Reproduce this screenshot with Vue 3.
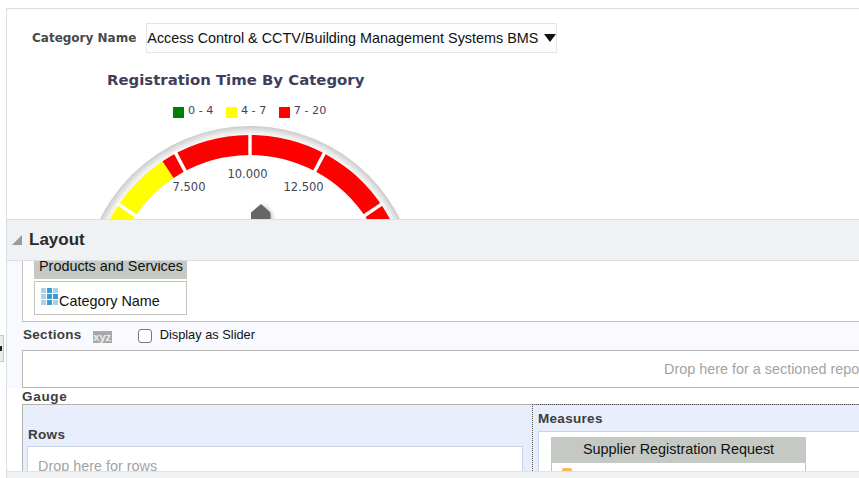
<script setup>
const cx = 250
const cy = 293.5
const rOut = 158.5
const rIn = 138.5
const pt = (r, deg) => {
  const a = (deg * Math.PI) / 180
  return `${(cx + r * Math.sin(a)).toFixed(2)} ${(cy - r * Math.cos(a)).toFixed(2)}`
}
const band = (from, to) =>
  `M${pt(rOut, from)} A${rOut} ${rOut} 0 0 1 ${pt(rOut, to)} L${pt(rIn, to)} A${rIn} ${rIn} 0 0 0 ${pt(rIn, from)} Z`
const segments = [
  { d: band(-83, -33.5), fill: '#ffff00' },
  { d: band(-33.5, 83), fill: '#ff0000' }
]
const ticks = [-83.7, -55.8, -27.9, 0, 27.9, 55.8, 83.7].map((deg) => ({
  x1: cx + (rIn - 2) * Math.sin((deg * Math.PI) / 180),
  y1: cy - (rIn - 2) * Math.cos((deg * Math.PI) / 180),
  x2: cx + (rOut + 2) * Math.sin((deg * Math.PI) / 180),
  y2: cy - (rOut + 2) * Math.cos((deg * Math.PI) / 180)
}))
const legend = [
  { label: '0 - 4', color: '#008000' },
  { label: '4 - 7', color: '#ffff00' },
  { label: '7 - 20', color: '#ff0000' }
]
const cells = Array.from({ length: 9 }, (_, i) => i)
</script>

<template>
  <div class="page">
    <div class="handle"><span class="handle-arrow"></span></div>
    <div class="frame">
      <section class="report">
        <div class="filter">
          <span class="filter-label">Category Name</span>
          <div class="select">
            <span>Access Control &amp; CCTV/Building Management Systems BMS</span>
            <span class="caret"></span>
          </div>
        </div>
        <h2 class="title">Registration Time By Category</h2>
        <div class="legend">
          <span v-for="item in legend" :key="item.label" class="legend-item">
            <i class="swatch" :style="{ background: item.color }"></i>{{ item.label }}
          </span>
        </div>
        <svg class="gauge" width="500" height="478" viewBox="0 0 500 478">
          <defs>
            <radialGradient id="rim" gradientUnits="userSpaceOnUse" :cx="cx" :cy="cy" r="168">
              <stop offset="0.93" stop-color="#ffffff" />
              <stop offset="0.96" stop-color="#eeeeee" />
              <stop offset="1" stop-color="#c8c8c8" />
            </radialGradient>
            <filter id="needleShadow" x="-50%" y="-50%" width="200%" height="200%">
              <feGaussianBlur stdDeviation="2.5" />
            </filter>
          </defs>
          <circle :cx="cx" :cy="cy" r="167.5" fill="url(#rim)" />
          <path v-for="s in segments" :key="s.fill" :d="s.d" :fill="s.fill" />
          <line
            v-for="(t, i) in ticks"
            :key="i"
            :x1="t.x1"
            :y1="t.y1"
            :x2="t.x2"
            :y2="t.y2"
            stroke="#ffffff"
            stroke-width="3.4"
          />
          <text x="189" y="191" class="tick-label" text-anchor="middle">7.500</text>
          <text x="247.5" y="178" class="tick-label" text-anchor="middle">10.000</text>
          <text x="303.5" y="191" class="tick-label" text-anchor="middle">12.500</text>
          <path d="M256 210 L266 206 L272 216 L272 232 L256 232 Z" fill="#000" opacity="0.28" filter="url(#needleShadow)" />
          <path d="M261 204 L270.500 212.500 L270.500 232 L251 232 L251 212.500 Z" fill="#666666" />
        </svg>
      </section>

      <section class="layout">
        <header class="layout-head">
          <span class="disclosure"></span>
          <span class="layout-title">Layout</span>
        </header>
        <div class="layout-upper">
          <div class="products-box">
            <div class="col-head">Products and Services</div>
            <div class="col-item">
              <span class="grid-icon"><i v-for="c in cells" :key="c" :class="{ dark: c === 1 || c === 4 || c === 5 || c === 7 }"></i></span>
              <span class="col-text">Category Name</span>
            </div>
          </div>
          <div class="sections-row">
            <span class="bold-label sections-label">Sections</span>
            <span class="xyz">xyz</span>
            <span class="check"></span>
            <span class="slider-text">Display as Slider</span>
          </div>
          <div class="section-drop">Drop here for a sectioned report</div>
        </div>
        <div class="bold-label gauge-label">Gauge</div>
        <div class="gauge-box">
          <div class="rows">
            <div class="bold-label rows-label">Rows</div>
            <div class="rows-drop">Drop here for rows</div>
          </div>
          <div class="measures">
            <div class="bold-label measures-label">Measures</div>
            <div class="measures-area">
              <div class="measure-col">
                <div class="measure-head">Supplier Registration Request</div>
                <div class="measure-body"><i class="measure-icon"></i></div>
              </div>
            </div>
          </div>
        </div>
      </section>
      <div class="bottom-bar"></div>
    </div>
  </div>
</template>

<style scoped>
.page {
  position: relative;
  width: 859px;
  height: 478px;
  overflow: hidden;
  background: #fff;
  font-family: "Liberation Sans", Arial, sans-serif;
  padding: 8px 0 0 6px;
  box-sizing: border-box;
}
.handle {
  position: absolute;
  left: 0;
  top: 335px;
  width: 4px;
  height: 27px;
  background: #ececec;
  border: 1px solid #c8c8c8;
  border-left: 0;
  box-sizing: border-box;
}
.handle-arrow {
  position: absolute;
  left: 0;
  top: 10px;
  width: 2px;
  height: 5px;
  background: #222;
}
.frame {
  position: relative;
  height: 470px;
  border-top: 1px solid #d6dfe6;
  border-left: 1px solid #d6dfe6;
  overflow: hidden;
}
.report {
  position: relative;
  height: 210px;
  overflow: hidden;
}
.filter {
  display: flex;
  align-items: center;
  gap: 10px;
  padding: 14px 0 0 25px;
}
.filter-label {
  font-family: "DejaVu Sans", sans-serif;
  font-size: 12px;
  font-weight: bold;
  color: #494949;
}
.select {
  display: flex;
  align-items: center;
  width: 411px;
  height: 30px;
  box-sizing: border-box;
  border: 1px solid #e1e6ea;
  background: #fcfdfe;
  font-size: 14.4px;
  color: #111;
  white-space: nowrap;
}
.caret {
  width: 0;
  height: 0;
  margin-left: 6px;
  border-left: 6.5px solid transparent;
  border-right: 6.5px solid transparent;
  border-top: 8px solid #111;
}
.title {
  margin: 18px 0 0;
  padding-left: 100px;
  font-family: "DejaVu Sans", sans-serif;
  font-size: 14.9px;
  line-height: 18px;
  font-weight: bold;
  color: #3f3f5a;
}
.legend {
  display: flex;
  gap: 12.5px;
  margin-top: 15px;
  padding-left: 166px;
  font-family: "DejaVu Sans", sans-serif;
  font-size: 11.2px;
  line-height: 14px;
  color: #444458;
}
.legend-item {
  display: flex;
  align-items: center;
  gap: 4px;
}
.swatch {
  width: 11px;
  height: 11px;
  margin-top: 2px;
}
.gauge {
  position: absolute;
  left: -7px;
  top: -9px;
}
.tick-label {
  font-family: "DejaVu Sans", sans-serif;
  font-size: 11.5px;
  fill: #444458;
}
.layout {
  position: relative;
  height: 252px;
  background: #fff;
  overflow: hidden;
}
.layout-head {
  display: flex;
  align-items: center;
  gap: 7px;
  height: 42px;
  box-sizing: border-box;
  padding-left: 5px;
  background: #f0f1f2;
  border-top: 1px solid #d9dfe4;
  border-bottom: 1px solid #d9dfe4;
}
.disclosure {
  width: 0;
  height: 0;
  border-left: 10px solid transparent;
  border-bottom: 10px solid #9a9a9a;
}
.layout-title {
  font-size: 17px;
  font-weight: bold;
  color: #2a2a2a;
}
.layout-upper {
  height: 127px;
  padding-left: 15px;
  background: #f8faff;
  overflow: hidden;
}
.products-box {
  width: 1500px;
  height: 61px;
  box-sizing: border-box;
  padding: 0 0 0 11px;
  border: 1px solid #c4c4bc;
  border-top: 0;
  background: #fff;
}
.col-head {
  width: 153px;
  height: 18px;
  box-sizing: border-box;
  padding-left: 5px;
  background: #c5c9c3;
  font-size: 14.4px;
  line-height: 11px;
  color: #111;
}
.col-item {
  display: flex;
  width: 153px;
  height: 34px;
  margin-top: 2px;
  box-sizing: border-box;
  border: 1px solid #c4c4bc;
  padding: 6px 0 0 6px;
  font-size: 14.4px;
}
.grid-icon {
  display: grid;
  grid-template-columns: repeat(3, 5px);
  grid-auto-rows: 5px;
  gap: 1px;
  width: 18px;
  height: 17px;
}
.grid-icon i {
  background: #a9cfe9;
}
.grid-icon i.dark {
  background: #3d9bd3;
}
.col-text {
  margin-top: 5px;
  color: #111;
}
.sections-row {
  display: flex;
  align-items: center;
  height: 28px;
  box-sizing: border-box;
  padding-bottom: 4px;
}
.bold-label {
  font-size: 13.5px;
  font-weight: bold;
  color: #3d3d3d;
  letter-spacing: 0.3px;
}
.sections-label {
  margin-left: 1px;
}
.xyz {
  width: 19px;
  height: 12px;
  margin: 6px 0 0 11px;
  background: #a9a9a9;
  color: #eee;
  font-size: 11px;
  line-height: 12px;
  font-weight: bold;
  text-align: center;
  overflow: hidden;
}
.check {
  width: 12px;
  height: 12px;
  margin: 4px 0 0 26px;
  border: 1px solid #777;
  border-radius: 3px;
  background: #fff;
}
.slider-text {
  margin-left: 8px;
  font-size: 12.8px;
  color: #111;
}
.section-drop {
  width: 1488px;
  height: 38px;
  box-sizing: border-box;
  border: 1px solid #b8b8b4;
  background: #fff;
  text-align: center;
  font-size: 14.4px;
  line-height: 36px;
  color: #a3a3a3;
  white-space: nowrap;
}
.gauge-label {
  margin-left: 15px;
  height: 16px;
  line-height: 18px;
  letter-spacing: 0.7px;
}
.gauge-box {
  display: flex;
  width: 1500px;
  height: 80px;
  margin-left: 15px;
  border: 1px solid #b4b4ae;
  border-bottom: 0;
  background: #e8eefc;
}
.rows {
  width: 509px;
  padding: 22px 0 0 4px;
  box-sizing: border-box;
}
.rows-label {
  height: 19px;
  margin-left: 1px;
  line-height: 16px;
}
.rows-drop {
  width: 496px;
  height: 60px;
  box-sizing: border-box;
  padding: 11px 0 0 10px;
  border: 1px solid #c6d3e6;
  background: #fff;
  font-size: 14.4px;
  color: #a3a3a3;
}
.measures {
  flex: 1;
  padding: 5px 0 0 5px;
  border-left: 1px dotted #555;
  border-top: 1px dotted #555;
  margin-top: -1px;
}
.measures-label {
  height: 21px;
  line-height: 18px;
}
.measures-area {
  height: 60px;
  padding: 5px 0 0 12px;
  border: 1px solid #c6d3e6;
  background: #fff;
}
.measure-col {
  width: 255px;
}
.measure-head {
  height: 26px;
  background: #c5c9c3;
  text-align: center;
  font-size: 14.4px;
  line-height: 25px;
  color: #111;
}
.measure-body {
  height: 40px;
  box-sizing: border-box;
  border: 1px solid #c4c4bc;
  border-top: 0;
  padding: 5px 0 0 10px;
}
.measure-icon {
  display: block;
  width: 10px;
  height: 8px;
  background: #f5b95f;
  border-radius: 2px 2px 0 0;
}
.bottom-bar {
  position: absolute;
  left: 0;
  right: 0;
  top: 462px;
  height: 8px;
  background: #f0f1f2;
  border-top: 1px solid #e0e3e6;
}
</style>
